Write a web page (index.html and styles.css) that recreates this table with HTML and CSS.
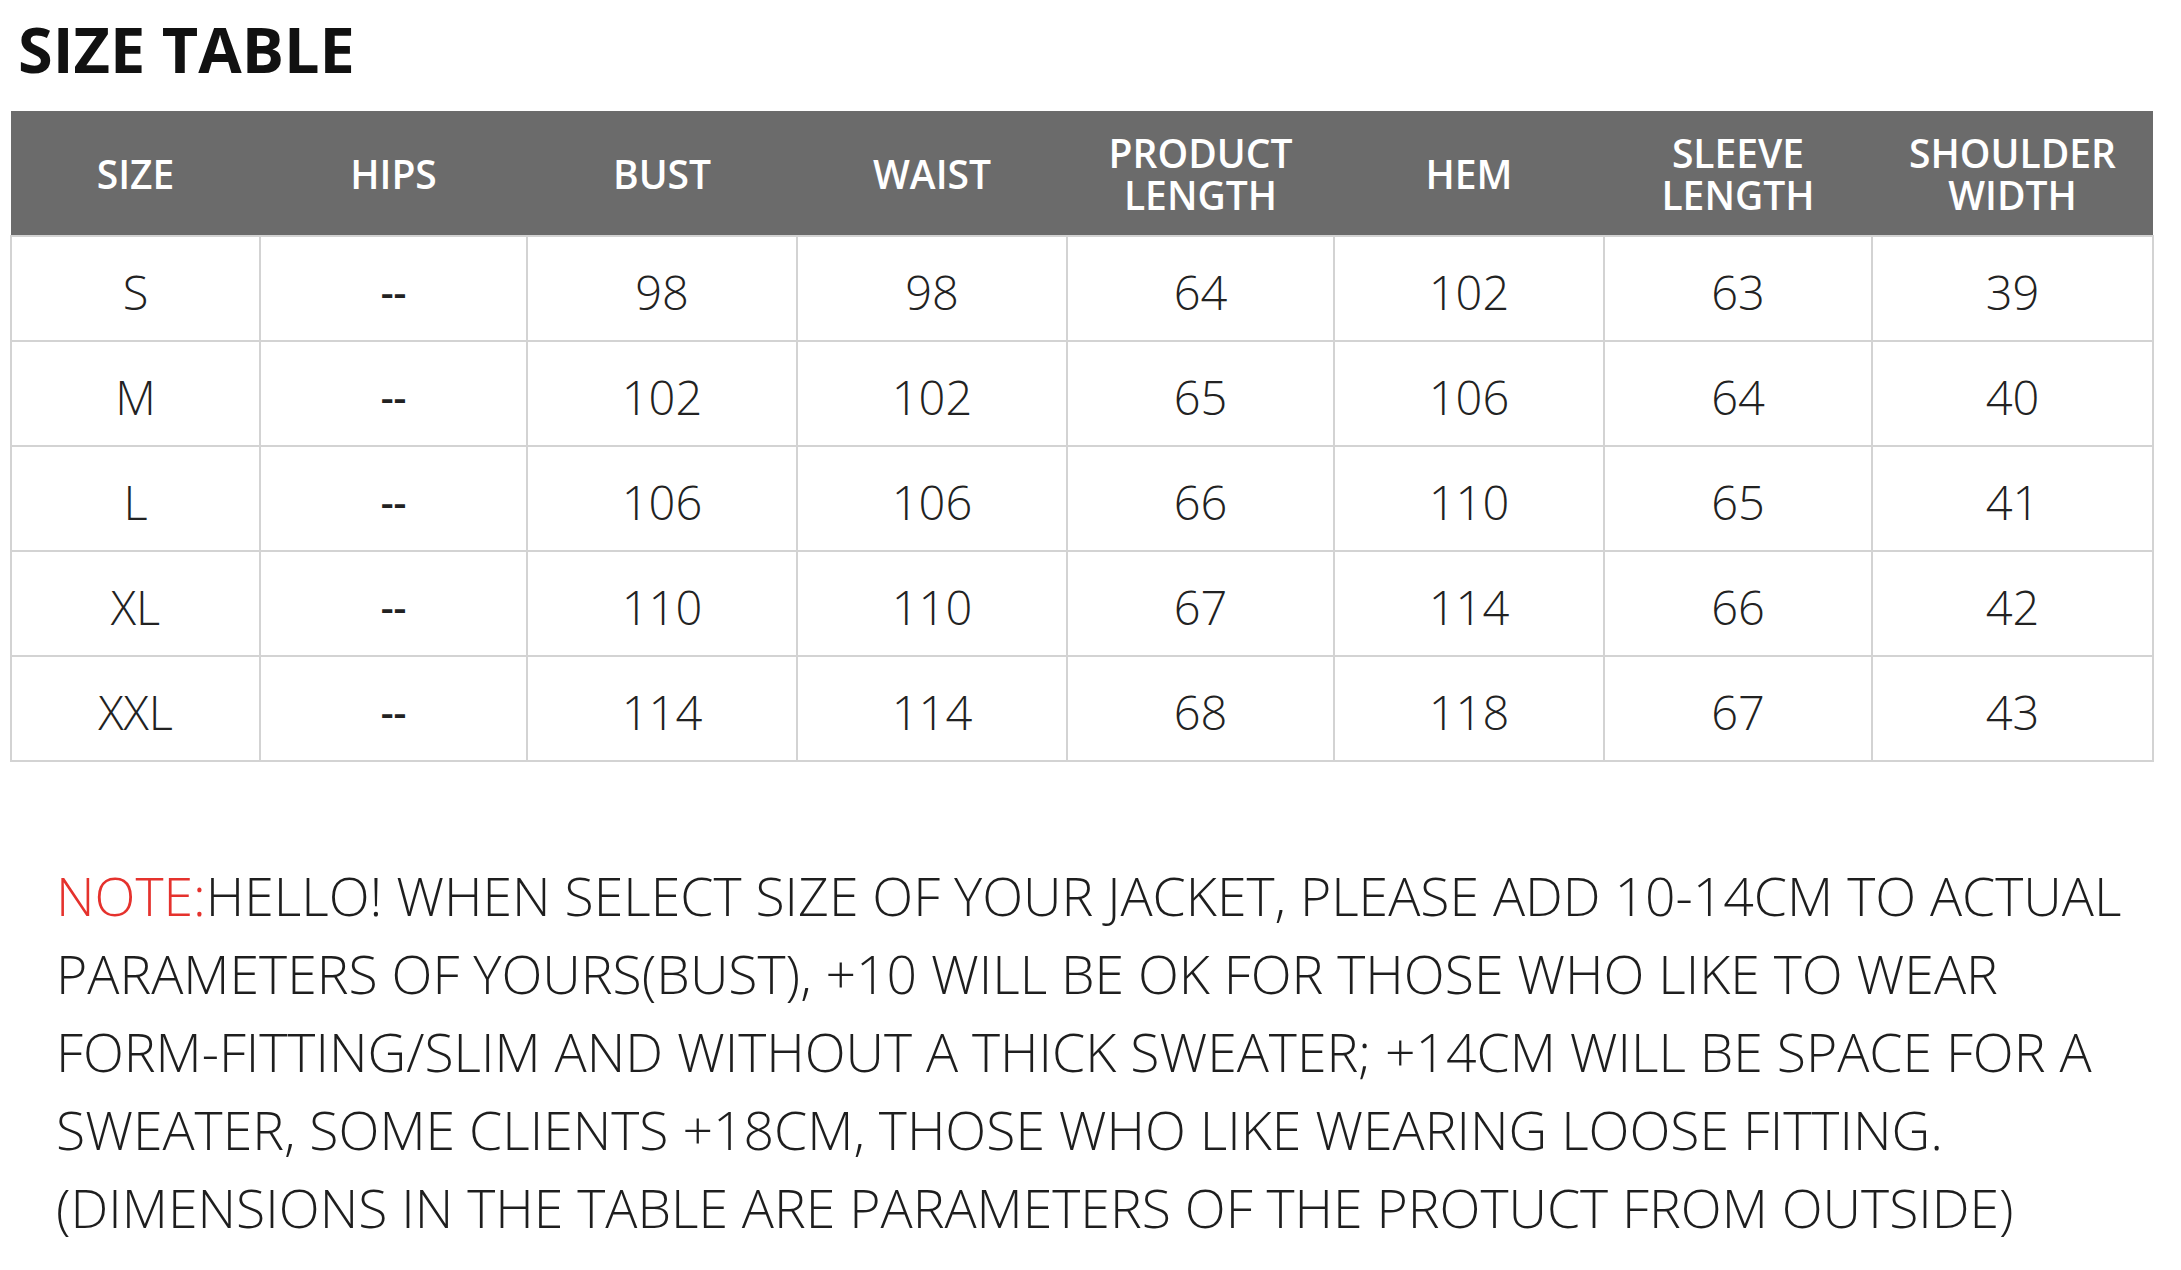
FILE: index.html
```html
<!DOCTYPE html>
<html>
<head>
<meta charset="utf-8">
<link rel="stylesheet" href="styles.css">
</head>
<body>
<div class="page">
  <h1 class="title">SIZE TABLE</h1>
  <table class="size-table">
    <colgroup>
      <col class="c1"><col class="c2"><col class="c3"><col class="c4"><col class="c5"><col class="c6"><col class="c7"><col class="c8">
    </colgroup>
    <thead>
      <tr>
        <th>SIZE</th><th>HIPS</th><th>BUST</th><th>WAIST</th><th>PRODUCT<br>LENGTH</th><th>HEM</th><th>SLEEVE<br>LENGTH</th><th>SHOULDER<br>WIDTH</th>
      </tr>
    </thead>
    <tbody>
      <tr><td>S</td><td class="dash">--</td><td>98</td><td>98</td><td>64</td><td>102</td><td>63</td><td>39</td></tr>
      <tr><td>M</td><td class="dash">--</td><td>102</td><td>102</td><td>65</td><td>106</td><td>64</td><td>40</td></tr>
      <tr><td>L</td><td class="dash">--</td><td>106</td><td>106</td><td>66</td><td>110</td><td>65</td><td>41</td></tr>
      <tr><td>XL</td><td class="dash">--</td><td>110</td><td>110</td><td>67</td><td>114</td><td>66</td><td>42</td></tr>
      <tr><td>XXL</td><td class="dash">--</td><td>114</td><td>114</td><td>68</td><td>118</td><td>67</td><td>43</td></tr>
    </tbody>
  </table>
  <p class="note"><span class="note-label">NOTE:</span>HELLO! WHEN SELECT SIZE OF YOUR JACKET, PLEASE ADD 10-14CM TO ACTUAL<br>PARAMETERS OF YOURS(BUST), +10 WILL BE OK FOR THOSE WHO LIKE TO WEAR<br>FORM-FITTING/SLIM AND WITHOUT A THICK SWEATER; +14CM WILL BE SPACE FOR A<br>SWEATER, SOME CLIENTS +18CM, THOSE WHO LIKE WEARING LOOSE FITTING.<br>(DIMENSIONS IN THE TABLE ARE PARAMETERS OF THE PROTUCT FROM OUTSIDE)</p>
</div>
</body>
</html>
```

FILE: styles.css
```css
html, body {
  margin: 0;
  padding: 0;
  background: #ffffff;
}

.page {
  font-family: "Open Sans", "Liberation Sans", sans-serif;
  color: #1e1e1e;
  padding: 17px 0 0 10px;
}

.title {
  margin: 0 0 31px 8px;
  font-size: 63px;
  line-height: 63px;
  font-weight: 700;
  color: #111;
}

.size-table {
  border-collapse: collapse;
  table-layout: fixed;
  width: 2142px;
}

.c1 { width: 249px; }
.c2 { width: 267px; }
.c3 { width: 270px; }
.c4 { width: 270px; }
.c5 { width: 267px; }
.c6 { width: 270px; }
.c7 { width: 268px; }
.c8 { width: 281px; }

.size-table th {
  background: #6b6b6b;
  color: #ffffff;
  font-weight: 600;
  font-size: 39px;
  line-height: 42px;
  height: 125px;
  padding: 2px 0 0;
  box-sizing: border-box;
  text-align: center;
  vertical-align: middle;
}

.size-table td {
  border: 2px solid #d3d3d3;
  height: 105px;
  box-sizing: border-box;
  padding: 6px 0 0;
  text-align: center;
  vertical-align: middle;
  font-size: 47px;
  font-weight: 300;
  color: #222;
}

.size-table td.dash {
  font-weight: 600;
  font-size: 40px;
}

.note {
  margin: 95px 0 0 46px;
  font-size: 53.5px;
  line-height: 78px;
  font-weight: 300;
  color: #1e1e1e;
  white-space: nowrap;
}

.note-label {
  color: #e5322d;
}
```
